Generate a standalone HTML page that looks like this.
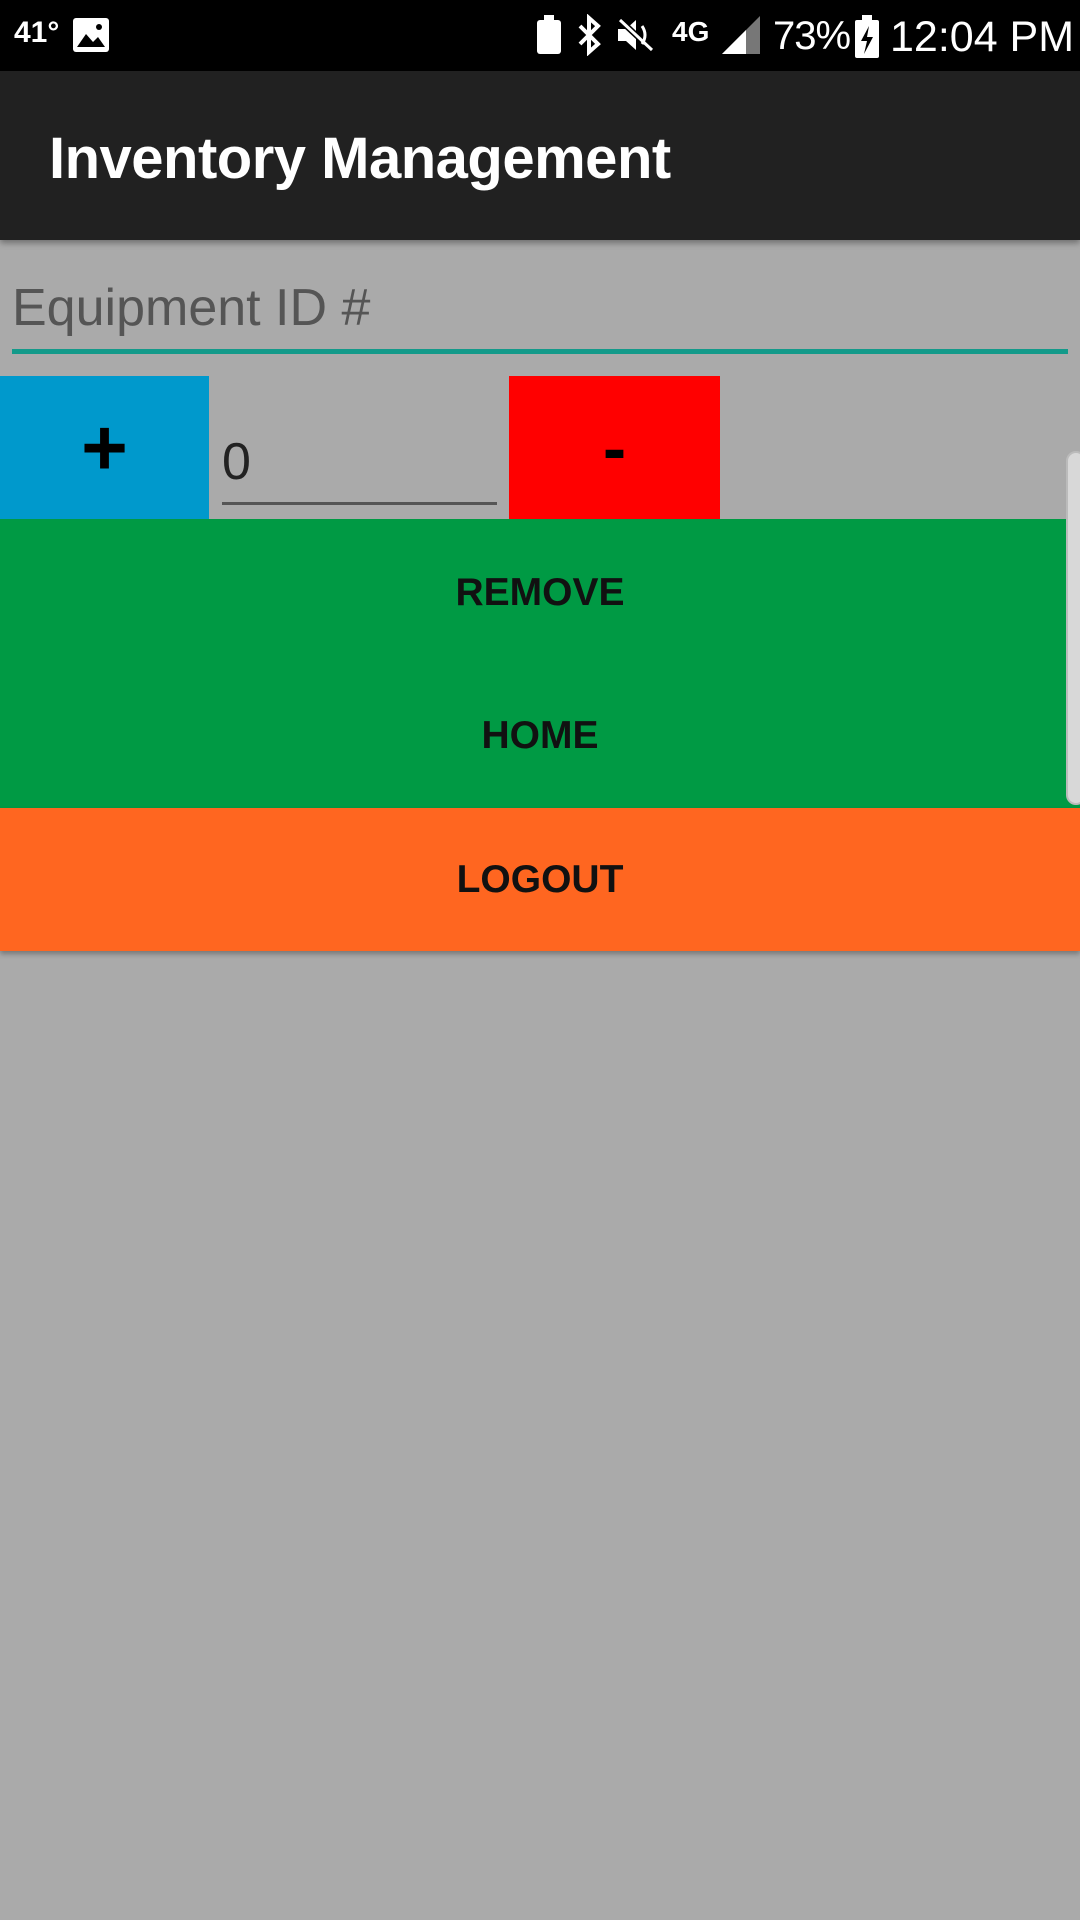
<!DOCTYPE html>
<html><head><meta charset="utf-8"><style>
*{margin:0;padding:0;box-sizing:border-box}
body{width:1080px;height:1920px;background:#aaaaaa;font-family:"Liberation Sans",sans-serif;position:relative;overflow:hidden}
.abs{position:absolute}
#status{left:0;top:0;width:1080px;height:71px;background:#000;color:#fff}
#bar{left:0;top:71px;width:1080px;height:169px;background:#212121;box-shadow:0 3px 6px rgba(0,0,0,.35)}
#bar span{position:absolute;left:49px;top:54px;font-size:58px;color:#fff;font-weight:bold;letter-spacing:-0.5px}
.btn{display:flex;align-items:center;justify-content:center;font-weight:bold;color:#111}
</style></head><body>
<div id="status" class="abs">
 <span class="abs" style="left:14px;top:16px;font-size:30px;font-weight:bold">41°</span>
 <svg class="abs" style="left:72px;top:17px" width="38" height="36" viewBox="0 0 38 36"><rect x="1" y="1" width="36" height="34" rx="3" fill="#fff"/><path d="M5 30 L14 17 L21 25 L26 20 L33 30Z" fill="#000"/><circle cx="27" cy="10" r="3" fill="#000"/></svg>
 <svg class="abs" style="left:535px;top:14px" width="30" height="42"><rect x="2" y="6" width="24" height="34" rx="3" fill="#fff"/><rect x="9" y="1" width="10" height="6" fill="#fff"/></svg>
 <svg class="abs" style="left:574px;top:14px" width="30" height="42"><path d="M6 12 L24 30 L15 38 L15 4 L24 12 L6 30" stroke="#fff" stroke-width="4" fill="none"/></svg>
 <svg class="abs" style="left:616px;top:16px" width="40" height="38"><path d="M2 13 H10 L20 4 V34 L10 25 H2Z" fill="#fff"/><path d="M4 4 L36 34" stroke="#000" stroke-width="6"/><path d="M4 4 L36 34" stroke="#fff" stroke-width="3"/><path d="M26 10 Q32 19 26 28" stroke="#fff" stroke-width="3" fill="none"/></svg>
 <span class="abs" style="left:672px;top:16px;font-size:28px;font-weight:bold">4G</span>
 <svg class="abs" style="left:722px;top:16px" width="38" height="38"><path d="M0 38 L38 0 L38 38Z" fill="#777"/><path d="M0 38 L24 14 L24 38Z" fill="#fff"/></svg>
 <span class="abs" style="left:773px;top:14px;font-size:40px;letter-spacing:-1px">73%</span>
 <svg class="abs" style="left:854px;top:14px" width="26" height="44"><rect x="1" y="6" width="24" height="38" rx="2" fill="#fff"/><rect x="8" y="1" width="10" height="6" fill="#fff"/><path d="M15 12 L7 27 L13 27 L10 40 L19 23 L13 23Z" fill="#000"/></svg>
 <span class="abs" style="left:890px;top:13px;font-size:43px">12:04 PM</span>
</div>
<div id="bar" class="abs"><span>Inventory Management</span></div>
<div class="abs" style="left:12px;top:278px;font-size:52px;color:#555">Equipment ID #</div>
<div class="abs" style="left:12px;top:349px;width:1056px;height:5px;background:#139a8a"></div>
<div class="abs btn" style="left:0;top:376px;width:209px;height:143px;background:#0099cc;font-size:80px;color:#000">+</div>
<div class="abs" style="left:222px;top:432px;font-size:52px;color:#222">0</div>
<div class="abs" style="left:222px;top:502px;width:275px;height:3px;background:#555"></div>
<div class="abs btn" style="left:509px;top:376px;width:211px;height:143px;background:#ff0000;font-size:70px;color:#000">-</div>
<div class="abs" style="left:0;top:519px;width:1080px;height:289px;background:#009a44"></div>
<div class="abs btn" style="left:0;top:519px;width:1080px;height:148px;font-size:39px">REMOVE</div>
<div class="abs btn" style="left:0;top:664px;width:1080px;height:144px;font-size:39px">HOME</div>
<div class="abs" style="left:1066px;top:451px;width:20px;height:354px;background:#d8d8d8;border-radius:12px;border:2px solid #bbb"></div>
<div class="abs btn" style="left:0;top:808px;width:1080px;height:143px;background:#ff6620;font-size:39px;box-shadow:0 3px 5px rgba(0,0,0,.3)">LOGOUT</div>
</body></html>
